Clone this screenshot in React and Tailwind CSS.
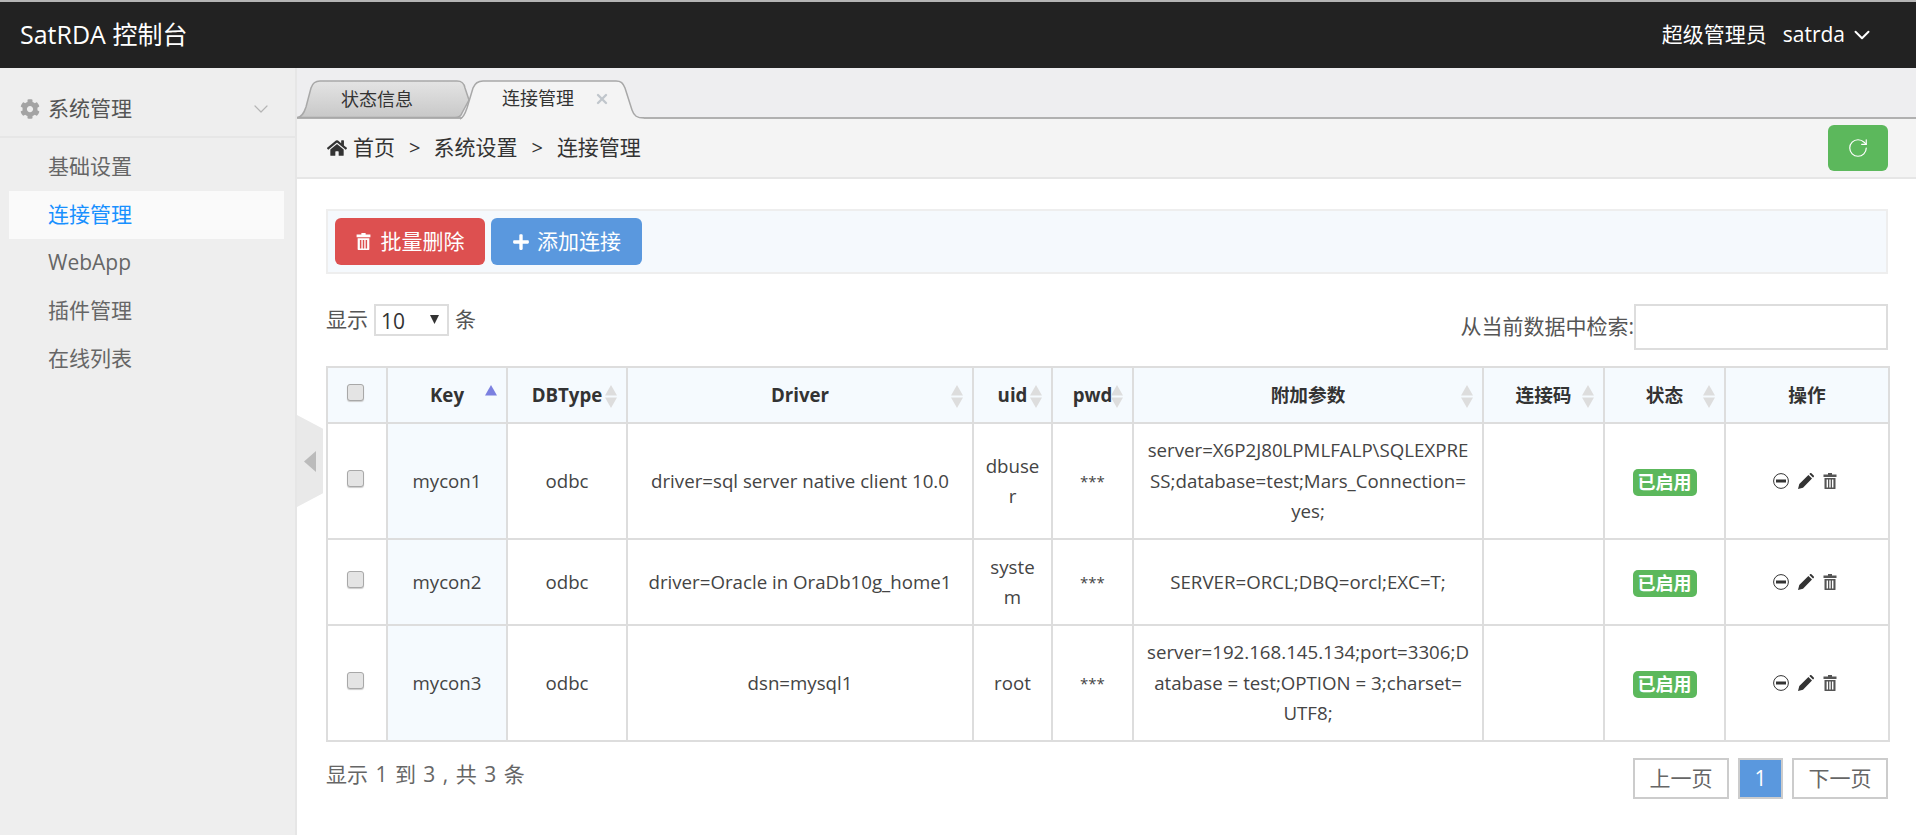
import { ChevronDown, RotateCw, X } from 'lucide-react';
import { FaCog, FaHome, FaPlus } from 'react-icons/fa';

const rows = [
  {
    key: 'mycon1',
    driver: 'driver=sql server native client 10.0',
    uid: ['dbuse', 'r'],
    params: ['server=X6P2J80LPMLFALP\\SQLEXPRE', 'SS;database=test;Mars_Connection=', 'yes;'],
    height: 'h-[116px]',
  },
  {
    key: 'mycon2',
    driver: 'driver=Oracle in OraDb10g_home1',
    uid: ['syste', 'm'],
    params: ['SERVER=ORCL;DBQ=orcl;EXC=T;'],
    height: 'h-[86px]',
  },
  {
    key: 'mycon3',
    driver: 'dsn=mysql1',
    uid: ['root'],
    params: ['server=192.168.145.134;port=3306;D', 'atabase = test;OPTION = 3;charset=', 'UTF8;'],
    height: 'h-[116px]',
  },
];

const menu = ['基础设置', '连接管理', 'WebApp', '插件管理', '在线列表'];

function TrashIcon({ className }) {
  return (
    <svg viewBox="0 0 14 16" className={className} fill="currentColor">
      <path d="M5 0h4v1.5h4.5V4H.5V1.5H5z" />
      <path fillRule="evenodd" d="M1.5 5h11v10.4a.6.6 0 0 1-.6.6H2.1a.6.6 0 0 1-.6-.6zM3.600 6.500v8h1.400v-8zM6.300 6.500v8h1.400v-8zM9 6.500v8h1.400v-8z" />
    </svg>
  );
}

function SortIcon({ active }) {
  return (
    <svg viewBox="0 0 12 23" className="absolute right-[9px] top-[17px] w-[12px] h-[23px]">
      <path d="M6 0l6 10.5H0z" fill={active ? '#7b80e0' : '#dddddd'} />
      {!active && <path d="M6 23l6-10.5H0z" fill="#dddddd" />}
    </svg>
  );
}

function Checkbox() {
  return (
    <input
      type="checkbox"
      className="appearance-none block mx-auto -mt-[5px] -translate-x-[2px] w-[17px] h-[17px] bg-[#e4e4e4] border border-[#a8a8a8] rounded-[3px] shadow-[0_1px_1px_#ccc]"
    />
  );
}

function Th({ children, sort, active, className = '' }) {
  return (
    <th className={`relative border-2 border-[#dddddd] bg-[#f5fafe] px-0 font-bold text-[18.7px] text-[#333] ${className}`}>
      {children}
      {sort && <SortIcon active={active} />}
    </th>
  );
}

function Td({ children, className = '' }) {
  return (
    <td className={`border-2 border-[#dddddd] px-0 text-center text-[18.7px] leading-[30.5px] text-[#444] ${className}`}>
      {children}
    </td>
  );
}

function Lines({ items }) {
  return items.map((t, i) => <div key={i} className="whitespace-nowrap">{t}</div>);
}

export default function App() {
  return (
    <div className="h-[835px] overflow-hidden flex flex-col bg-white [font-family:'Open_Sans','Noto_Sans_CJK_SC',sans-serif]">

      {/* Top bar */}
      <header className="h-[68px] shrink-0 border-t-2 border-[#b5b5b5] bg-[#222222] text-white flex items-center justify-between pl-[20px] pr-[41px]">
        <div className="text-[25px]">SatRDA 控制台</div>
        <div className="flex items-center text-[21px]">
          <span>超级管理员</span>
          <span className="ml-[16px] font-medium">satrda</span>
          <ChevronDown className="ml-[4px] w-[26px] h-[26px]" strokeWidth={1.8} />
        </div>
      </header>

      <div className="flex-1 flex min-h-0">

        {/* Sidebar */}
        <aside className="w-[297px] shrink-0 bg-[#eeeeee] border-r-2 border-[#e6e6e6]">
          <div className="h-[70px] pt-[14px] border-b-2 border-[#e6e6e6] flex items-center pl-[20px] pr-[22px] text-[21px] text-[#555]">
            <FaCog className="w-[20px] h-[20px] text-[#a3a3a3]" />
            <span className="ml-[8px] flex-1">系统管理</span>
            <ChevronDown className="w-[24px] h-[24px] text-[#b5b5b5]" strokeWidth={1.2} />
          </div>
          <nav className="pt-[5px] pl-[9px] pr-[11px]">
            {menu.map((m) => (
              <div
                key={m}
                className={`h-[48px] flex items-center pl-[39px] text-[21px] ${m === '连接管理' ? 'bg-[#fafafa] text-[#1890ff]' : 'text-[#666666]'}`}
              >
                {m}
              </div>
            ))}
          </nav>
        </aside>

        {/* Main */}
        <main className="relative flex-1 flex flex-col min-w-0">

          {/* Collapse handle */}
          <div className="absolute left-0 top-[347px] w-[26px] h-[92px] bg-[#e9e9e9] [clip-path:polygon(0_0,100%_15%,100%_85%,0_100%)] flex items-center justify-center">
            <svg viewBox="0 0 12 21" className="w-[12px] h-[21px]">
              <path d="M12 0v21L0 10.5z" fill="#bbbbbb" />
            </svg>
          </div>

          {/* Tabs */}
          <div className="h-[51px] shrink-0 bg-[#eeeef0] pt-[12px] flex border-b-2 border-[#b0b0b0]">
            <div className="relative w-[173px] h-[38px] flex items-center pl-[44px] text-[18px] text-[#333]">
              <svg viewBox="0 0 173 38" preserveAspectRatio="none" className="absolute inset-0 w-full h-full">
                <defs>
                  <linearGradient id="tabbg" x1="0" y1="0" x2="0" y2="1">
                    <stop offset="0" stopColor="#e4e4e4" />
                    <stop offset="1" stopColor="#c8c8c8" />
                  </linearGradient>
                </defs>
                <path d="M0 37.5C5 37 7 33 9 27L14 8C15.500 3 18 1 23 1H160C165 1 167 3 168 8L172 20 165 33C164 36 162 37.500 158 37.500Z" fill="url(#tabbg)" stroke="#a8a8a8" strokeWidth="1.500" />
              </svg>
              <span className="relative">状态信息</span>
            </div>
            <div className="relative z-10 -ml-[10px] w-[184px] h-[40px] flex items-center pl-[42px] pb-[3px] text-[18px] text-[#333]">
              <svg viewBox="0 0 184 40" preserveAspectRatio="none" className="absolute inset-0 w-full h-full">
                <path d="M0 40C3 38 5 34 7 28L13 8C15 3 18 1 23 1H156C161 1 163 3 165 8L172 30C174 36 177 38 184 38V40Z" fill="#f4f4f4" />
                <path d="M0 39C3 38 5 34 7 28L13 8C15 3 18 1 23 1H156C161 1 163 3 165 8L172 30C174 36 177 38 184 38" fill="none" stroke="#a8a8a8" strokeWidth="1.500" />
              </svg>
              <span className="relative">连接管理</span>
              <X className="relative ml-[20px] w-[16px] h-[16px] text-[#c0c6cc]" strokeWidth={3.5} />
            </div>
          </div>

          {/* Breadcrumb */}
          <div className="h-[60px] shrink-0 bg-[#f4f4f4] border-b-2 border-[#e6e6e6] flex items-center justify-between pl-[30px] pr-[28px] text-[21px] text-[#333]">
            <div className="flex items-center">
              <FaHome className="w-[20px] h-[20px]" />
              <span className="ml-[6px]">首页</span>
              <span className="ml-[14px] text-[20px]">&gt;</span>
              <span className="ml-[13px]">系统设置</span>
              <span className="ml-[14px] text-[20px]">&gt;</span>
              <span className="ml-[14px]">连接管理</span>
            </div>
            <button className="w-[60px] h-[46px] rounded-[6px] bg-[#5cb85c] text-white flex items-center justify-center">
              <RotateCw className="w-[22px] h-[22px]" strokeWidth={1.3} />
            </button>
          </div>

          {/* Content */}
          <div className="flex-1 pl-[29px] pr-[28px] pt-[30px]">

            {/* Toolbar */}
            <div className="h-[65px] bg-[#f5f9fd] border-2 border-[#eeeeee] flex items-center pl-[7px] gap-[6px]">
              <button className="w-[150px] h-[47px] rounded-[6px] bg-[#dd5050] text-white text-[21px] flex items-center justify-center">
                <TrashIcon className="w-[15px] h-[17px] mr-[10px]" />
                批量删除
              </button>
              <button className="w-[151px] h-[47px] rounded-[6px] bg-[#5a98de] text-white text-[21px] flex items-center justify-center">
                <FaPlus className="w-[18px] h-[18px] mr-[7px]" />
                添加连接
              </button>
            </div>

            {/* Length + search */}
            <div className="mt-[30px] h-[62px] flex justify-between items-start text-[#555] text-[21px]">
              <div className="flex items-center">
                <span>显示</span>
                <div className="relative ml-[6px]">
                  <select className="appearance-none block w-[75px] h-[32px] border-2 border-[#dddddd] bg-white pl-[5px] text-[21px] text-[#333] outline-none">
                    <option>10</option>
                  </select>
                  <svg viewBox="0 0 9 9" className="absolute right-[10px] top-[11px] w-[9px] h-[9px]">
                    <path d="M0 0h9L4.500 9z" fill="#333333" />
                  </svg>
                </div>
                <span className="ml-[6px]">条</span>
              </div>
              <div className="flex items-center">
                <span>从当前数据中检索:</span>
                <input className="w-[254px] h-[46px] border-2 border-[#dddddd] bg-white outline-none" />
              </div>
            </div>

            {/* Table */}
            <table className="table-fixed border-collapse w-[1562px]">
              <colgroup>
                <col className="w-[60px]" />
                <col className="w-[120px]" />
                <col className="w-[120px]" />
                <col className="w-[346px]" />
                <col className="w-[79px]" />
                <col className="w-[81px]" />
                <col className="w-[350px]" />
                <col className="w-[121px]" />
                <col className="w-[121px]" />
                <col className="w-[164px]" />
              </colgroup>
              <thead>
                <tr className="h-[56px]">
                  <Th><Checkbox /></Th>
                  <Th sort active>Key</Th>
                  <Th sort>DBType</Th>
                  <Th sort>Driver</Th>
                  <Th sort>uid</Th>
                  <Th sort>pwd</Th>
                  <Th sort>附加参数</Th>
                  <Th sort>连接码</Th>
                  <Th sort>状态</Th>
                  <Th>操作</Th>
                </tr>
              </thead>
              <tbody>
                {rows.map((r) => (
                  <tr key={r.key} className={r.height}>
                    <Td><Checkbox /></Td>
                    <Td className="bg-[#f5fafe]">{r.key}</Td>
                    <Td>odbc</Td>
                    <Td>{r.driver}</Td>
                    <Td><Lines items={r.uid} /></Td>
                    <Td><span className="text-[15px]">***</span></Td>
                    <Td><Lines items={r.params} /></Td>
                    <Td></Td>
                    <Td>
                      <span className="inline-block align-middle h-[27px] leading-[27px] px-[5px] rounded-[5px] bg-[#5cb85c] text-white font-bold text-[18px]">
                        已启用
                      </span>
                    </Td>
                    <Td>
                      <div className="flex items-center justify-center gap-[9px] -translate-x-[2px] text-[#333]">
                        <svg viewBox="0 0 16 16" className="w-[16px] h-[16px]">
                          <circle cx="8" cy="8" r="7.400" fill="none" stroke="#333" strokeWidth="1" />
                          <rect x="3" y="6.500" width="10" height="3" fill="#333" />
                        </svg>
                        <svg viewBox="0 0 16 16" className="w-[16px] h-[16px]" fill="currentColor">
                          <path d="M0 16l1.300-5L10.400 1.900 14 5.600 5 14.700zM11.400.9l.7-.6c.4-.4 1-.4 1.300 0l2.300 2.300c.4.300.4.900 0 1.300l-.7.700z" />
                        </svg>
                        <TrashIcon className="w-[14px] h-[16px] text-[#555]" />
                      </div>
                    </Td>
                  </tr>
                ))}
              </tbody>
            </table>

            {/* Footer */}
            <div className="mt-[16px] flex justify-between items-start">
              <div className="text-[21px] text-[#666666] mt-[1px] [word-spacing:2px]">显示 1 到 3 , 共 3 条</div>
              <div className="flex gap-[9px] text-[21px]">
                <button className="w-[96px] h-[41px] border-2 border-[#cccccc] bg-white text-[#666666]">上一页</button>
                <button className="w-[45px] h-[41px] border-2 border-[#cccccc] bg-[#5a98de] text-white">1</button>
                <button className="w-[96px] h-[41px] border-2 border-[#cccccc] bg-white text-[#666666]">下一页</button>
              </div>
            </div>
          </div>
        </main>
      </div>
    </div>
  );
}
